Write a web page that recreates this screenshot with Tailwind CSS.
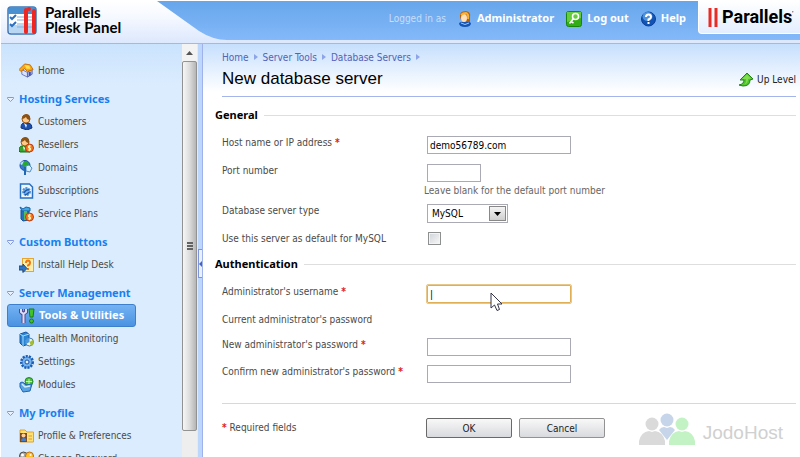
<!DOCTYPE html>
<html lang="en">
<head>
  <meta charset="UTF-8">
  <title>New database server - Parallels Plesk Panel</title>
  <meta name="viewport" content="width=device-width, initial-scale=1.0">
  <script src="https://cdn.jsdelivr.net/npm/@tailwindcss/browser@4"></script>
</head>
<body class="h-screen flex flex-col overflow-hidden bg-white border-t border-l border-white font-['DejaVu_Sans_Condensed','DejaVu_Sans',sans-serif] text-[10px] text-[#4a4a4a]">

  <!-- Top bar -->
  <header class="relative shrink-0 h-[43px] flex items-start justify-between bg-linear-to-b from-[#66a6eb] to-[#86bbfb] border-b border-[#a5b6ea]">
    <div class="absolute inset-x-0 bottom-0 h-[3px] bg-[#dde8fc]"></div>
    <svg class="absolute left-0 top-0" width="226" height="42" viewBox="0 0 226 42">
      <defs><linearGradient id="brand" x1="0" y1="0" x2="0" y2="1"><stop offset="0" stop-color="#fff"/><stop offset=".35" stop-color="#f6f9ff"/><stop offset="1" stop-color="#dde8fd"/></linearGradient></defs>
      <path d="M0 0H156L198 30Q212 39 226 39V42H0Z" fill="url(#brand)"/>
    </svg>
    <a href="#" class="relative flex items-center gap-[7px] pl-1.5 pt-1 text-black">
      <svg width="31" height="29" viewBox="0 0 31 29">
        <rect x="1" y="1" width="28" height="27" rx="3" fill="#fff" stroke="#3f78b8" stroke-width="1.5"/>
        <path d="M1 5Q1 1 5 1H26Q29 1 29 5V8H1Z" fill="#4a8fd0"/>
        <path d="M2 19H28V25Q28 27 26 27H4Q2 27 2 25Z" fill="#b9d7f3"/>
        <path d="M3 11L5 13L9 9M3 18L5 20L9 16" fill="none" stroke="#2c6fc0" stroke-width="2"/>
        <path d="M10 11H28M10 14H28M10 18H28M10 21H28" stroke="#83afdc"/>
        <path d="M19 4V26M27 5V26" stroke="#ee2722" stroke-width="4" stroke-linecap="round"/>
        <circle cx="22" cy="3" r="2" fill="#ee2722"/>
      </svg>
      <span class="flex flex-col font-[Lato,sans-serif] font-bold text-[15px] leading-[15px]">
        <span>Parallels</span>
        <span>Plesk Panel</span>
      </span>
    </a>
    <div class="relative flex items-start font-['Noto_Sans',sans-serif] font-bold text-[11px] text-white">
      <div class="flex items-center h-[35px] gap-3">
        <span class="font-['DejaVu_Sans_Condensed',sans-serif] text-[10px] font-normal text-[#c7defa]">Logged in as</span>
        <a href="#" class="flex items-center gap-[5px]">
          <svg width="14" height="16" viewBox="0 0 14 16"><path d="M1 12Q4 10 7 11Q11 10 13 12Q13 16 7 16Q1 16 1 12Z" fill="#1554b4"/><path d="M3 12Q7 15 11 12" fill="none" stroke="#9cc8f5"/><path d="M2 6Q1 0 8 0Q13 1 12 6V11H8L3 9Z" fill="#b4600f"/><ellipse cx="6" cy="7" rx="3" ry="4" fill="#ffe0b8"/><path d="M3 4Q5 2 8 2Q11 3 10 8" fill="none" stroke="#f9b233" stroke-width="2"/></svg>
          Administrator
        </a>
        <a href="#" class="flex items-center gap-[5px]">
          <svg width="16" height="16" viewBox="0 0 16 16"><rect x=".5" y=".5" width="15" height="15" rx="2" fill="#32ad16" stroke="#19850b"/><path d="M1 1H15V7L1 11Z" fill="#65cd3d"/><circle cx="9.500" cy="5.500" r="3" fill="none" stroke="#fff" stroke-width="1.500"/><path d="M7.500 7.500L3.500 12.500M5 10.500L7.500 12" stroke="#fff" stroke-width="1.500"/></svg>
          Log out
        </a>
        <a href="#" class="flex items-center gap-[5px]">
          <svg width="15" height="16" viewBox="0 0 15 16"><circle cx="7.500" cy="8" r="7" fill="#1254b4" stroke="#0d3f93"/><ellipse cx="6.500" cy="5.500" rx="5" ry="4.500" fill="#4e92de"/><path d="M5 6Q5 3.500 7.500 3.500T10 6Q10 7.500 7.500 8.500V10M7.500 11V13" fill="none" stroke="#fff" stroke-width="2"/></svg>
          Help
        </a>
      </div>
      <a href="#" class="ml-3 flex items-center gap-1 w-[102px] h-[33px] pl-[9px] rounded-bl bg-linear-to-b from-white to-[#e3eefe] border-l border-b border-white text-black overflow-hidden">
        <svg class="shrink-0" width="10" height="19" viewBox="0 0 10 19"><path d="M2 0V19M8 0V19" stroke="#e92b24" stroke-width="3"/></svg>
        <span class="font-[Roboto,sans-serif] font-bold text-[18px] leading-5">Parallels<sup class="text-[6px] -top-2">'</sup></span>
      </a>
    </div>
  </header>

  <div class="flex flex-1 min-h-0">
    <!-- Sidebar -->
    <nav class="w-[181px] shrink-0 overflow-hidden pt-[15px] pl-[6px] pr-3 bg-linear-to-b from-[#cae3fd] to-[#dbecfe] to-[40px]">
      <div class="flex flex-col gap-1.5">
        <a href="#" class="flex items-center h-[23px] gap-1 pl-3">
          <svg width="15" height="15" viewBox="0 0 16 16"><path d="M3 7L9 10V15L3 12Z" fill="#dce4fb" stroke="#6676bd"/><path d="M9 10L14 6V12L9 15Z" fill="#a5b1e6" stroke="#5a66b0"/><path d="M0 7L6 1L12 2L15 7L9 9L6 6L2 9Z" fill="#f8a813" stroke="#c96d06"/><path d="M6 2L11 3L12 6L8 6Z" fill="#ffe14f"/><path d="M10.500 9.500H12.500V13L10.500 14Z" fill="#4150a2"/></svg>
          Home
        </a>
        <section>
          <h2 class="flex items-center h-[22px] gap-[5px] font-['Noto_Sans',sans-serif] text-[11px] font-bold text-[#187fee]"><svg width="7" height="5" viewBox="0 0 7 5"><path d="M.5 .5H6.500V1.500L3.500 4.500L.5 1.500Z" fill="#e8f1ff" stroke="#8398e2"/></svg>Hosting Services</h2>
          <a href="#" class="flex items-center h-[23px] gap-1 pl-3">
            <svg width="15" height="16" viewBox="0 0 15 16"><path d="M2 14Q2 9 5 9H10Q13 10 13 14L8 16Z" fill="#1c50ac" stroke="#12357d"/><path d="M5 9L8 11L7 14Z" fill="#e6efff"/><circle cx="7" cy="5" r="4" fill="#ffc98a" stroke="#9c5a18"/><path d="M3 5Q3 0 8 0Q12 1 11 6Q8 6 7 3Q5 5 3 5Z" fill="#8b5215"/></svg>
            Customers
          </a>
          <a href="#" class="flex items-center h-[23px] gap-1 pl-3">
            <svg width="15" height="16" viewBox="0 0 15 16"><path d="M0 14Q0 9 3 9H8Q11 10 11 15H1Z" fill="#37a22a" stroke="#157015"/><path d="M4 9L6 11L5 14Z" fill="#fff"/><circle cx="6" cy="5" r="4" fill="#ffc98a" stroke="#9c5a18"/><path d="M2 5Q2 0 7 0Q11 1 10 6Q7 6 6 3Q4 5 2 5Z" fill="#8b5215"/><circle cx="10.500" cy="11" r="4" fill="#f8771b" stroke="#c33a0b"/><path d="M12 9H9.500V11H11.500V13H9M10.500 8V14" fill="none" stroke="#fff1b0"/></svg>
            Resellers
          </a>
          <a href="#" class="flex items-center h-[23px] gap-1 pl-3">
            <svg width="15" height="16" viewBox="0 0 15 16"><circle cx="6" cy="5.500" r="5" fill="#3979d4" stroke="#1b4fa6"/><path d="M2 4Q5 0 9 2L10 5L6 7L4 5Z" fill="#27a92f"/><path d="M1 4Q3 1 5 1L3 5Z" fill="#b5e7fa"/><path d="M7 6L10 5L13 8L11 12L7 11Z" fill="#d5efff" stroke="#4e8ec9"/><path d="M6 7V15" stroke="#2267b3" stroke-width="2"/></svg>
            Domains
          </a>
          <a href="#" class="flex items-center h-[23px] gap-1 pl-3">
            <svg width="15" height="16" viewBox="0 0 15 16"><path d="M1.500 1H10.500L13.500 4V15H1.500Z" fill="#eef7ff" stroke="#286fc4" stroke-width="1.500"/><circle cx="7.500" cy="8.500" r="3.500" fill="#7fb7ea" stroke="#4d94d8" stroke-width="2" stroke-dasharray="2 1"/><path d="M5 10Q7 6 10 7M6 12Q9 11 10 9" fill="none" stroke="#205ab0" stroke-width="1.500"/></svg>
            Subscriptions
          </a>
          <a href="#" class="flex items-center h-[23px] gap-1 pl-3">
            <svg width="15" height="16" viewBox="0 0 15 16"><path d="M2 4H10V14L4 15L2 13Z" fill="#2371bd" stroke="#174f99"/><path d="M1 1L4 3L7 1L11 2V5H3Z" fill="#40a7e0" stroke="#1661aa"/><path d="M5 5V14H8V5" fill="#54bb5c"/><circle cx="10.500" cy="11" r="4" fill="#f8771b" stroke="#c33a0b"/><path d="M12 9H9.500V11H11.500V13H9M10.500 8V14" fill="none" stroke="#fff1b0"/></svg>
            Service Plans
          </a>
        </section>
        <section>
          <h2 class="flex items-center h-[22px] gap-[5px] font-['Noto_Sans',sans-serif] text-[11px] font-bold text-[#187fee]"><svg width="7" height="5" viewBox="0 0 7 5"><path d="M.5 .5H6.500V1.500L3.500 4.500L.5 1.500Z" fill="#e8f1ff" stroke="#8398e2"/></svg>Custom Buttons</h2>
          <a href="#" class="flex items-center h-[23px] gap-1 pl-3">
            <svg width="15" height="16" viewBox="0 0 15 16"><rect x="3.500" y="1.500" width="11" height="13" fill="#ffefac" stroke="#e8a42e"/><path d="M7 6Q7 3.500 9 3.500T11 6Q11 7.500 9 8.500V9.500M9 11V13" fill="none" stroke="#ee7611" stroke-width="2"/><path d="M0 9H4V7L8 11.500L4 15.500V13H0Z" fill="#2e75c6" stroke="#174c95"/></svg>
            Install Help Desk
          </a>
        </section>
        <section>
          <h2 class="flex items-center h-[22px] gap-[5px] font-['Noto_Sans',sans-serif] text-[11px] font-bold text-[#187fee]"><svg width="7" height="5" viewBox="0 0 7 5"><path d="M.5 .5H6.500V1.500L3.500 4.500L.5 1.500Z" fill="#e8f1ff" stroke="#8398e2"/></svg>Server Management</h2>
          <a href="#" class="flex items-center w-[129px] h-[23px] gap-1 pl-[11px] rounded-[3px] border border-[#3d7fcb] bg-linear-to-b from-[#74b2f3] to-[#4a93e1] font-['Noto_Sans',sans-serif] text-[11px] font-bold text-white">
            <svg width="16" height="16" viewBox="0 0 16 16"><path d="M2 1V4L4 6L7 4V1M4.500 6V15" fill="none" stroke="#4f4a91" stroke-width="4"/><path d="M2 1V4L4.500 6L7 4V1M4.500 6V15" fill="none" stroke="#dcdcf7" stroke-width="2"/><path d="M10 1H15L14 9H11Z" fill="#43c32a" stroke="#177d12"/><circle cx="12.500" cy="13" r="2" fill="#43c32a" stroke="#177d12"/></svg>
            Tools &amp; Utilities
          </a>
          <a href="#" class="flex items-center h-[23px] gap-1 pl-3">
            <svg width="15" height="16" viewBox="0 0 15 16"><path d="M1 3L7 1L10 3V13L4 15L1 12Z" fill="#2a86d5" stroke="#1657a8"/><path d="M1 3L4 5V15M4 5L10 3" fill="none" stroke="#a9dcfa"/><circle cx="10.500" cy="11" r="4" fill="#eef5e1" stroke="#4379b4"/><path d="M10.500 11V7A4 4 0 0 0 7 13Z" fill="#4a99df"/><path d="M10.500 11L14 9A4 4 0 0 1 12 15Z" fill="#a5bd35"/></svg>
            Health Monitoring
          </a>
          <a href="#" class="flex items-center h-[23px] gap-1 pl-3">
            <svg width="15" height="16" viewBox="0 0 15 16"><circle cx="8" cy="8" r="5.500" fill="#4d99e3" stroke="#1b5db5" stroke-width="3" stroke-dasharray="2 1"/><circle cx="8" cy="8" r="4.500" fill="#76b4ef"/><circle cx="8" cy="8" r="2" fill="#e6f4ff" stroke="#1c4d9e"/></svg>
            Settings
          </a>
          <a href="#" class="flex items-center h-[23px] gap-1 pl-3">
            <svg width="15" height="16" viewBox="0 0 15 16"><circle cx="10" cy="4.500" r="4" fill="#51bd3f" stroke="#22872b"/><path d="M10 2V7M7 4.500H13" stroke="#c9f4b8"/><path d="M1 6Q3 4 5 6L7 8L13 7L11 14L4 15L1 10Z" fill="#5ba4e4" stroke="#1f64b4"/><path d="M3 7L6 10L11 9" fill="none" stroke="#d3eeff" stroke-width="1.500"/></svg>
            Modules
          </a>
        </section>
        <section>
          <h2 class="flex items-center h-[22px] gap-[5px] font-['Noto_Sans',sans-serif] text-[11px] font-bold text-[#187fee]"><svg width="7" height="5" viewBox="0 0 7 5"><path d="M.5 .5H6.500V1.500L3.500 4.500L.5 1.500Z" fill="#e8f1ff" stroke="#8398e2"/></svg>My Profile</h2>
          <a href="#" class="flex items-center h-[23px] gap-1 pl-3">
            <svg width="15" height="16" viewBox="0 0 15 16"><path d="M1 2H6L8 4H14.500V14H1Z" fill="#ffe073" stroke="#e2a22f"/><rect x="1" y="5" width="7" height="9" fill="#7a4a20"/><circle cx="4.500" cy="7.500" r="2" fill="#ffcd95"/><path d="M2 13Q2 10 5 10T7 13Z" fill="#4480cc"/><path d="M9.500 8H13M9.500 11H13" stroke="#d79a33"/></svg>
            Profile &amp; Preferences
          </a>
          <a href="#" class="flex items-center h-[23px] gap-1 pl-3">
            <svg width="15" height="16" viewBox="0 0 15 16"><circle cx="4.500" cy="5" r="4" fill="#a5a5a5" stroke="#484848"/><circle cx="3.500" cy="4" r="1.500" fill="#fff"/><circle cx="10.500" cy="5" r="4" fill="#ffc022" stroke="#bf6d08"/><circle cx="11.500" cy="4" r="1" fill="#fff"/><path d="M9 8L4 15M5 8L10 15" stroke="#bf7a12" stroke-width="2"/></svg>
            Change Password
          </a>
        </section>
      </div>
    </nav>

    <!-- Sidebar scrollbar -->
    <div class="w-[15px] shrink-0 flex flex-col bg-[#eeeeee]">
      <div class="h-[17px] shrink-0 flex items-center justify-center bg-[#f3f3f3]">
        <svg width="7" height="4" viewBox="0 0 7 4"><path d="M3.500 0L7 4H0Z" fill="#555"/></svg>
      </div>
      <div class="flex-1 flex flex-col items-center justify-center gap-px rounded-[2px] border border-[#929292] bg-linear-to-r from-[#f6f6f6] via-[#dddddd] to-[#b5b5b5]">
        <div class="w-1.5 h-0.5 bg-[#626262]"></div>
        <div class="w-1.5 h-0.5 bg-[#626262]"></div>
        <div class="w-1.5 h-0.5 bg-[#626262]"></div>
      </div>
      <div class="h-[26px] shrink-0"></div>
    </div>
    <div class="w-[6px] shrink-0 flex items-center bg-[#bcd7fb] border-l border-r border-l-[#dcebfd] border-r-[#9fb2ec]">
      <button type="button" aria-label="Hide sidebar" class="w-full h-[29px] mb-[-26px] flex items-center justify-center bg-[#e9f1fe] border border-r-0 border-[#7d95dd]">
        <svg width="3" height="6" viewBox="0 0 3 6"><path d="M3 0V6L0 3Z" fill="#4863be"/></svg>
      </button>
    </div>

    <!-- Page content -->
    <main class="relative flex-1 min-w-0 pl-3 pr-1 bg-linear-to-b from-[#c6dffd] to-white to-[48px]">
      <div class="ml-[7px] border-b border-[#a5b4ea]">
        <div class="flex items-center gap-[5px] pt-1 h-[22px] text-[#5263b8]">
          <a href="#">Home</a>
          <svg width="4" height="6" viewBox="0 0 4 6"><path d="M0 0L4 3L0 6Z" fill="#8da5e8"/></svg>
          <a href="#">Server Tools</a>
          <svg width="4" height="6" viewBox="0 0 4 6"><path d="M0 0L4 3L0 6Z" fill="#8da5e8"/></svg>
          <a href="#">Database Servers</a>
          <svg width="4" height="6" viewBox="0 0 4 6"><path d="M0 0L4 3L0 6Z" fill="#8da5e8"/></svg>
        </div>
        <div class="flex items-center justify-between h-[30px] pb-1">
          <h1 class="font-['Liberation_Sans',Arial,sans-serif] text-[17px] leading-5 text-black">New database server</h1>
          <a href="#" class="flex items-center gap-[3px] text-[#222]">
            <svg width="16" height="15" viewBox="0 0 16 15"><path d="M1 13Q6 12 6 8H2L9 1L15 7L12 8Q12 14 5 14Z" fill="#4cc62c" stroke="#24811c"/><path d="M4 7L9 2.500L13 6.500L10 7Q10 11 6 13Q9 10 8 7Z" fill="#82dd50"/></svg>
            Up Level
          </a>
        </div>
      </div>

      <form class="text-[#4a4a4a]">
        <fieldset class="mt-2.5">
          <legend class="w-full flex items-center gap-1.5 h-4 font-['Noto_Sans',sans-serif] text-[11px] font-bold text-black">General<span class="flex-1 h-px bg-[#dedede]"></span></legend>
          <div class="grid grid-cols-[205px_1fr] pl-[7px] pt-[13px]">
            <label for="host" class="h-7 leading-[13px]">Host name or IP address <span class="text-[#e02020] font-bold">*</span></label>
            <div><input id="host" type="text" value="demo56789.com" class="block w-36 h-[18px] px-0.5 border border-[#aaaab4] bg-white text-black"></div>
            <label for="port" class="h-10 leading-[13px]">Port number</label>
            <div>
              <input id="port" type="text" class="block w-[54px] h-[18px] px-0.5 border border-[#aaaab4] bg-white text-black">
              <p class="-ml-[3px] mt-0.5 leading-[13px] text-[#666]">Leave blank for the default port number</p>
            </div>
            <label for="type" class="h-7 leading-[13px]">Database server type</label>
            <div class="relative w-[81px] h-[19px]">
              <select id="type" class="block w-full h-full appearance-none pl-1 border border-[#aaaab4] bg-white text-black"><option>MySQL</option></select>
              <span class="pointer-events-none absolute right-0.5 top-0.5 w-[17px] h-[15px] flex items-center justify-center border border-[#888] bg-linear-to-b from-[#f4f4f4] to-[#cfcfcf]"><svg width="7" height="4" viewBox="0 0 7 4"><path d="M0 0H7L3.500 4Z" fill="#000"/></svg></span>
            </div>
            <label for="default" class="h-4 leading-[13px]">Use this server as default for MySQL</label>
            <div><input id="default" type="checkbox" class="block appearance-none size-[13px] ml-px border border-[#8e8f8f] bg-linear-to-br from-[#cfd3d8] to-[#f8f8f8] shadow-[inset_0_0_0_1px_#f4f4f4]"></div>
          </div>
        </fieldset>

        <fieldset class="mt-2">
          <legend class="w-full flex items-center gap-1.5 h-4 font-['Noto_Sans',sans-serif] text-[11px] font-bold text-black">Authentication<span class="flex-1 h-px bg-[#dedede]"></span></legend>
          <div class="grid grid-cols-[205px_1fr] pl-[7px] pt-[13px]">
            <label for="user" class="h-7 leading-[13px]">Administrator's username <span class="text-[#e02020] font-bold">*</span></label>
            <div><input id="user" type="text" value="|" class="block w-36 h-[18px] px-0.5 rounded-[1px] border border-[#dfae55] bg-white text-black outline-1 outline-[#e8c88a]"></div>
            <span class="h-[25px] leading-[13px]">Current administrator's password</span>
            <span></span>
            <label for="pass" class="h-[27px] leading-[13px]">New administrator's password <span class="text-[#e02020] font-bold">*</span></label>
            <div><input id="pass" type="password" class="block w-36 h-[18px] px-0.5 border border-[#aaaab4] bg-white"></div>
            <label for="confirm" class="h-[27px] leading-[13px]">Confirm new administrator's password <span class="text-[#e02020] font-bold">*</span></label>
            <div><input id="confirm" type="password" class="block w-36 h-[18px] px-0.5 border border-[#aaaab4] bg-white"></div>
          </div>
        </fieldset>

        <div class="ml-[7px] mt-[11px] pt-3.5 border-t border-[#d8d8d8] grid grid-cols-[204px_1fr]">
          <p class="h-5 leading-5"><span class="text-[#e02020] font-bold">*</span> Required fields</p>
          <div class="flex gap-[7px]">
            <button type="submit" class="w-[86px] h-5 rounded-[2px] border border-[#696969] bg-linear-to-b from-[#f8f8f8] to-[#d9dade] text-[#222]">OK</button>
            <button type="button" class="w-[86px] h-5 rounded-[2px] border border-[#929292] bg-linear-to-b from-[#f8f8f8] to-[#d9dade] text-[#222]">Cancel</button>
          </div>
        </div>
      </form>

      <!-- Watermark -->
      <div class="pointer-events-none absolute right-[17px] bottom-[11px] flex items-end gap-2 text-[#d0d0d0]">
        <svg width="56" height="33" viewBox="0 0 56 33">
          <g fill="#c6d5e9"><circle cx="28" cy="7" r="6.500"/><path d="M20 17Q22 14 25 14L28 15L31 14Q34 14 36 17L28 27Z"/></g>
          <g fill="#dadada"><circle cx="13" cy="11" r="6.500"/><path d="M0 32V28Q2 19 10 18L13 19L16 18Q24 19 26 28V32Z"/></g>
          <g fill="#c3f3c4"><circle cx="43" cy="11" r="6.500"/><path d="M30 32V28Q32 19 40 18L43 19L46 18Q54 19 56 28V32Z"/></g>
        </svg>
        <span class="font-['Liberation_Sans',Arial,sans-serif] text-[19px] leading-[26px]">JodoHost</span>
      </div>

      <!-- Mouse pointer -->
      <svg class="pointer-events-none absolute left-[287px] top-[248px]" width="13" height="20" viewBox="0 0 13 20"><path d="M1 1V16L4.500 13L7 18.500L9.500 17.500L7.500 12H12Z" fill="#fff" stroke="#33334a"/></svg>
    </main>
  </div>
</body>
</html>
